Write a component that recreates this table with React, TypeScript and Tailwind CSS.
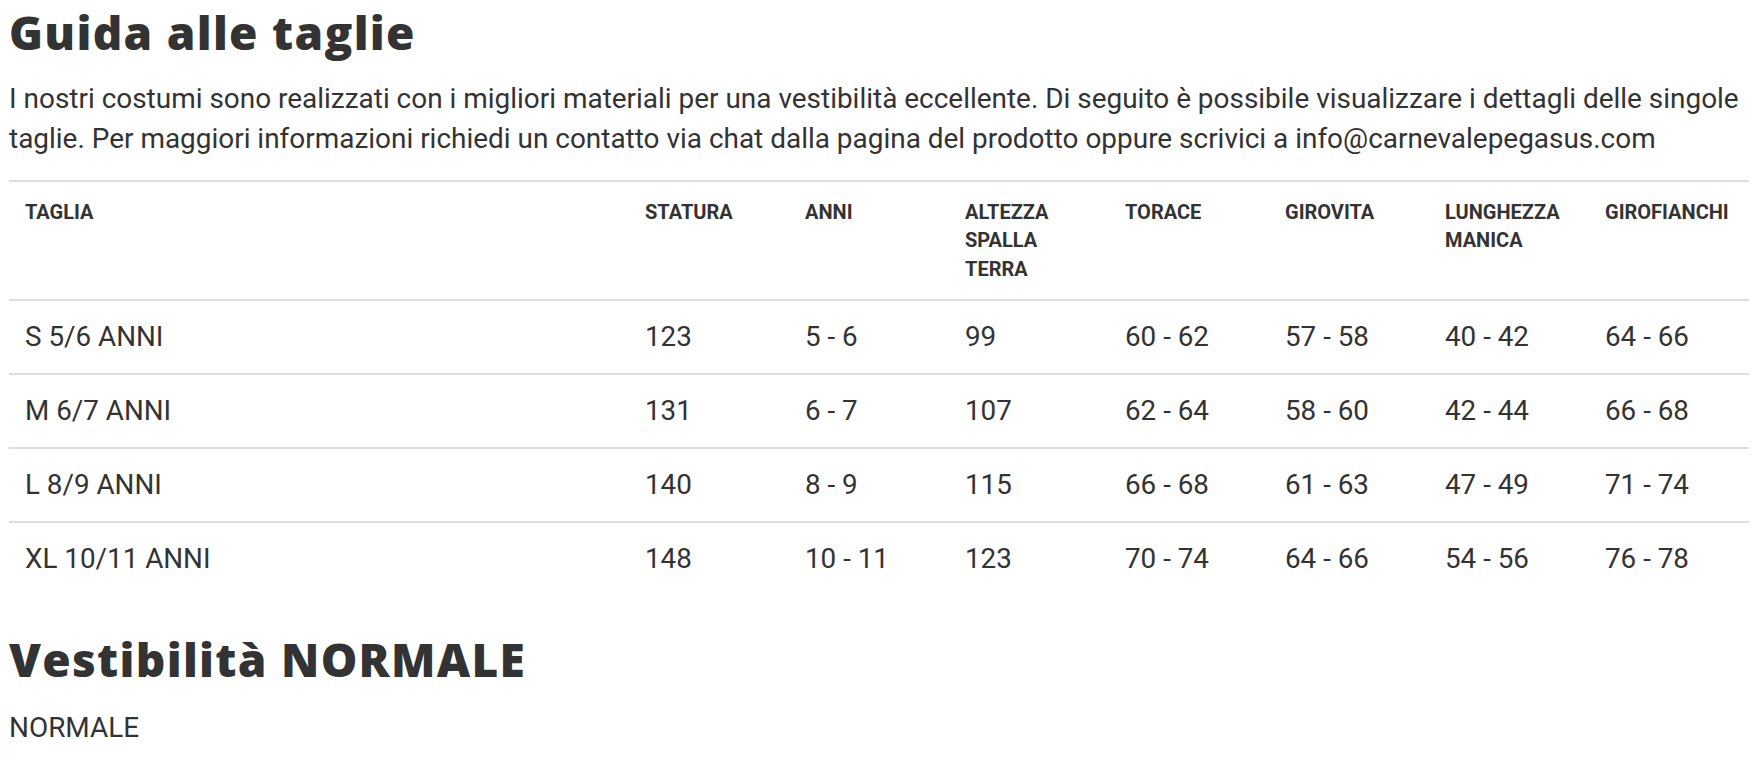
import React from "react";

const rows = [
  ["S 5/6 ANNI", "123", "5 - 6", "99", "60 - 62", "57 - 58", "40 - 42", "64 - 66"],
  ["M 6/7 ANNI", "131", "6 - 7", "107", "62 - 64", "58 - 60", "42 - 44", "66 - 68"],
  ["L 8/9 ANNI", "140", "8 - 9", "115", "66 - 68", "61 - 63", "47 - 49", "71 - 74"],
  ["XL 10/11 ANNI", "148", "10 - 11", "123", "70 - 74", "64 - 66", "54 - 56", "76 - 78"],
];

const headers: React.ReactNode[] = [
  "TAGLIA",
  "STATURA",
  "ANNI",
  <>ALTEZZA<br />SPALLA<br />TERRA</>,
  "TORACE",
  "GIROVITA",
  <>LUNGHEZZA<br />MANICA</>,
  "GIROFIANCHI",
];

export default function App() {
  return (
    <div className="min-h-[773px] w-[1754px] bg-white pl-[9px] pr-[5px] text-[#333333] [font-family:Roboto,'Liberation_Sans',sans-serif]">
      <h1 className="mt-[5px] text-[46px] leading-[55px] font-extrabold tracking-[1.3px] text-[#333333] [font-family:'Open_Sans',Inter,sans-serif]">
        Guida alle taglie
      </h1>
      <p className="mt-[19px] text-[27.95px] leading-[40px]">
        I nostri costumi sono realizzati con i migliori materiali per una vestibilità eccellente. Di seguito è possibile visualizzare i dettagli delle singole taglie. Per maggiori informazioni richiedi un contatto via chat dalla pagina del prodotto oppure scrivici a info@carnevalepegasus.com
      </p>
      <table className="mt-[21px] w-[1740px] table-fixed border-collapse">
        <colgroup>
          <col className="w-[620px]" />
          <col className="w-[160px]" />
          <col className="w-[160px]" />
          <col className="w-[160px]" />
          <col className="w-[160px]" />
          <col className="w-[160px]" />
          <col className="w-[160px]" />
          <col className="w-[160px]" />
        </colgroup>
        <thead>
          <tr className="border-t-2 border-[#dddddd]">
            {headers.map((h, i) => (
              <th
                key={i}
                className="p-4 text-left align-top text-[20px] leading-[28.4px] font-bold text-[#333333]"
              >
                {h}
              </th>
            ))}
          </tr>
        </thead>
        <tbody>
          {rows.map((r, ri) => (
            <tr key={ri} className="border-t-2 border-[#dddddd]">
              {r.map((c, ci) => (
                <td key={ci} className="p-4 text-left text-[27.8px] leading-[39.8px]">
                  {c}
                </td>
              ))}
            </tr>
          ))}
        </tbody>
      </table>
      <h2 className="mt-[38px] text-[46px] leading-[55px] font-extrabold tracking-[1.3px] text-[#333333] [font-family:'Open_Sans',Inter,sans-serif]">
        Vestibilità NORMALE
      </h2>
      <p className="mt-[21px] text-[27.95px] leading-[40px]">NORMALE</p>
    </div>
  );
}
